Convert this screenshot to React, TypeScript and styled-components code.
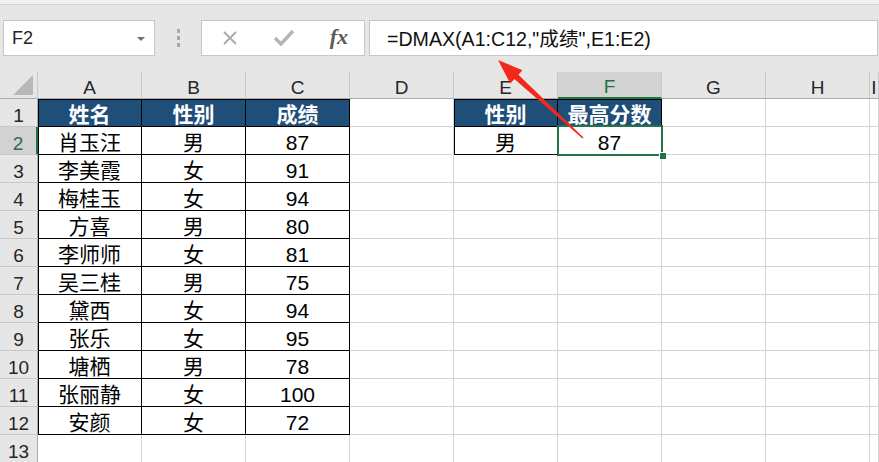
import React from "react";
import styled, { createGlobalStyle, css } from "styled-components";

const GlobalStyle = createGlobalStyle`
  html, body {
    margin: 0;
    padding: 0;
    background: #fff;
  }
  body {
    font-family: "Liberation Sans", "Noto Sans CJK SC", sans-serif;
  }
`;

const GREEN = "#217346";
const BLUE = "#1f4e79";

type CellData = {
  text?: string;
  fill?: boolean;
  boxed?: boolean;
  edgeLeft?: boolean;
  edgeTop?: boolean;
  selected?: boolean;
};

const COLS = ["A", "B", "C", "D", "E", "F", "G", "H", "I"];

const people: [string, string, string][] = [
  ["肖玉汪", "男", "87"],
  ["李美霞", "女", "91"],
  ["梅桂玉", "女", "94"],
  ["方喜", "男", "80"],
  ["李师师", "女", "81"],
  ["吴三桂", "男", "75"],
  ["黛西", "女", "94"],
  ["张乐", "女", "95"],
  ["塘栖", "男", "78"],
  ["张丽静", "女", "100"],
  ["安颜", "女", "72"],
];

const buildRows = (): CellData[][] => {
  const rows: CellData[][] = [];
  rows.push([
    { text: "姓名", fill: true, boxed: true, edgeLeft: true, edgeTop: true },
    { text: "性别", fill: true, boxed: true, edgeTop: true },
    { text: "成绩", fill: true, boxed: true, edgeTop: true },
    {},
    { text: "性别", fill: true, boxed: true, edgeLeft: true, edgeTop: true },
    { text: "最高分数", fill: true, boxed: true, edgeTop: true },
    {},
    {},
    {},
  ]);
  people.forEach(([name, sex, score], i) => {
    const row: CellData[] = [
      { text: name, boxed: true, edgeLeft: true },
      { text: sex, boxed: true },
      { text: score, boxed: true },
      {},
      {},
      {},
      {},
      {},
      {},
    ];
    if (i === 0) {
      row[4] = { text: "男", boxed: true, edgeLeft: true };
      row[5] = { text: "87", boxed: true, selected: true };
    }
    rows.push(row);
  });
  rows.push(COLS.map(() => ({})));
  return rows;
};

const App = () => {
  const rows = buildRows();
  return (
    <Page>
      <GlobalStyle />
      <TopStrip />
      <FormulaBar>
        <NameBox>
          <span>F2</span>
          <DropArrow />
        </NameBox>
        <Grip>
          <i />
          <i />
          <i />
        </Grip>
        <FuncBox>
          <svg width="16" height="16" viewBox="0 0 16 16">
            <path d="M2 2 L14 14 M14 2 L2 14" stroke="#a9a9a9" strokeWidth="1.8" fill="none" />
          </svg>
          <svg width="22" height="18" viewBox="0 0 22 18">
            <path d="M2 9 L8 15 L20 2" stroke="#b5b5b5" strokeWidth="3.4" fill="none" strokeLinejoin="miter" />
          </svg>
          <Fx>fx</Fx>
        </FuncBox>
        <FormulaInput>=DMAX(A1:C12,"成绩",E1:E2)</FormulaInput>
      </FormulaBar>

      <Sheet>
        <Corner>
          <svg width="22" height="22" viewBox="0 0 22 22">
            <polygon points="0,21 20,21 20,1" fill="#b8b8b8" />
          </svg>
        </Corner>
        {COLS.map((c) => (
          <ColHeader key={c} $active={c === "F"}>
            {c}
          </ColHeader>
        ))}
        {rows.map((row, r) => (
          <React.Fragment key={r}>
            <RowHeader $active={r === 1}>{r + 1}</RowHeader>
            {row.map((cell, c) => (
              <Cell
                key={c}
                $fill={cell.fill}
                $boxed={cell.boxed}
                $edgeLeft={cell.edgeLeft}
                $edgeTop={cell.edgeTop}
              >
                {cell.text}
                {cell.selected && (
                  <Selection>
                    <FillHandle />
                  </Selection>
                )}
              </Cell>
            ))}
          </React.Fragment>
        ))}
      </Sheet>

      <Arrow width="879" height="462" viewBox="0 0 879 462">
        <polygon
          points="498,60 522.5,70.3 518.4,74.7 583.5,137.4 582.5,138.6 514.4,79.1 510.3,83.5"
          fill="#f5261a"
        />
      </Arrow>
    </Page>
  );
};

export default App;

const Page = styled.div`
  position: relative;
  width: 879px;
  height: 462px;
  overflow: hidden;
  background: #e6e6e6;
`;

const TopStrip = styled.div`
  height: 4px;
  background: #f3f2f1;
  border-bottom: 1px solid #d4d4d4;
`;

const FormulaBar = styled.div`
  display: flex;
  align-items: flex-start;
  height: 67px;
  box-sizing: border-box;
  padding: 15px 1px 0 3px;
`;

const boxBase = css`
  box-sizing: border-box;
  height: 36px;
  background: #fff;
  border: 1px solid #c6c6c6;
`;

const NameBox = styled.div`
  ${boxBase};
  width: 152px;
  display: flex;
  align-items: center;
  justify-content: space-between;
  padding: 1px 9px 0 8px;
  font-size: 18px;
  color: #222;
`;

const DropArrow = styled.div`
  width: 0;
  height: 0;
  border-left: 4px solid transparent;
  border-right: 4px solid transparent;
  border-top: 4px solid #707070;
`;

const Grip = styled.div`
  width: 46px;
  height: 36px;
  display: flex;
  flex-direction: column;
  align-items: center;
  justify-content: center;
  gap: 3px;

  i {
    display: block;
    width: 3px;
    height: 4px;
    background: #a8a8a8;
  }
`;

const FuncBox = styled.div`
  ${boxBase};
  width: 164px;
  display: flex;
  align-items: center;
  justify-content: space-between;
  padding: 0 16px 0 20px;
`;

const Fx = styled.span`
  font-family: "Liberation Serif", "DejaVu Serif", serif;
  font-style: italic;
  font-weight: 700;
  font-size: 22px;
  color: #5a5a5a;
  margin-top: -2px;
`;

const FormulaInput = styled.div`
  ${boxBase};
  flex: 1;
  margin-left: 4px;
  display: flex;
  align-items: center;
  padding: 0 0 1px 17px;
  font-size: 19.6px;
  color: #111;
  white-space: nowrap;
`;

const Sheet = styled.div`
  display: grid;
  grid-template-columns: 38px repeat(8, 104px) 1fr;
  grid-template-rows: 27px repeat(13, 28px);
  background: #fff;
`;

const Corner = styled.div`
  box-sizing: border-box;
  background: #e6e6e6;
  border-right: 1px solid #c8c8c8;
  border-bottom: 1px solid #ababab;
  display: flex;
  align-items: flex-end;
  justify-content: flex-end;
  padding: 0 2px 2px 0;
`;

const ColHeader = styled.div<{ $active?: boolean }>`
  box-sizing: border-box;
  display: flex;
  align-items: flex-end;
  justify-content: center;
  padding-bottom: 1px;
  line-height: 1;
  font-size: 19px;
  background: ${(p) => (p.$active ? "#d2d2d2" : "#e6e6e6")};
  color: ${(p) => (p.$active ? GREEN : "#262626")};
  border-right: 1px solid #c8c8c8;
  border-bottom: ${(p) => (p.$active ? `2px solid ${GREEN}` : "1px solid #ababab")};
`;

const RowHeader = styled.div<{ $active?: boolean }>`
  box-sizing: border-box;
  display: flex;
  align-items: flex-end;
  justify-content: center;
  padding-bottom: 1px;
  line-height: 1;
  font-size: 19px;
  background: ${(p) => (p.$active ? "#d2d2d2" : "#e6e6e6")};
  color: ${(p) => (p.$active ? GREEN : "#262626")};
  border-bottom: 1px solid #c8c8c8;
  border-right: ${(p) => (p.$active ? `2px solid ${GREEN}` : "1px solid #ababab")};
`;

const Cell = styled.div<{
  $fill?: boolean;
  $boxed?: boolean;
  $edgeLeft?: boolean;
  $edgeTop?: boolean;
}>`
  position: relative;
  box-sizing: border-box;
  display: flex;
  align-items: flex-end;
  justify-content: center;
  line-height: 1;
  font-size: 21px;
  padding-bottom: 1px;
  white-space: nowrap;
  background: ${(p) => (p.$fill ? BLUE : "#fff")};
  color: ${(p) => (p.$fill ? "#fff" : "#000")};
  font-weight: ${(p) => (p.$fill ? 700 : 400)};
  border-right: 1px solid ${(p) => (p.$boxed ? "#000" : "#d4d4d4")};
  border-bottom: 1px solid ${(p) => (p.$boxed ? "#000" : "#d4d4d4")};
  box-shadow: ${(p) =>
    [p.$edgeLeft ? "inset 1px 0 0 #000" : "", p.$edgeTop ? "inset 0 1px 0 #000" : ""]
      .filter(Boolean)
      .join(", ") || "none"};
`;

const Selection = styled.div`
  position: absolute;
  z-index: 2;
  top: -2px;
  left: -1px;
  right: -2px;
  bottom: -2px;
  border: 2px solid ${GREEN};
  pointer-events: none;
`;

const FillHandle = styled.div`
  position: absolute;
  right: -5px;
  bottom: -5px;
  width: 6px;
  height: 6px;
  background: ${GREEN};
  border-top: 1px solid #fff;
  border-left: 1px solid #fff;
`;

const Arrow = styled.svg`
  position: absolute;
  z-index: 3;
  top: 0;
  left: 0;
  pointer-events: none;
`;
